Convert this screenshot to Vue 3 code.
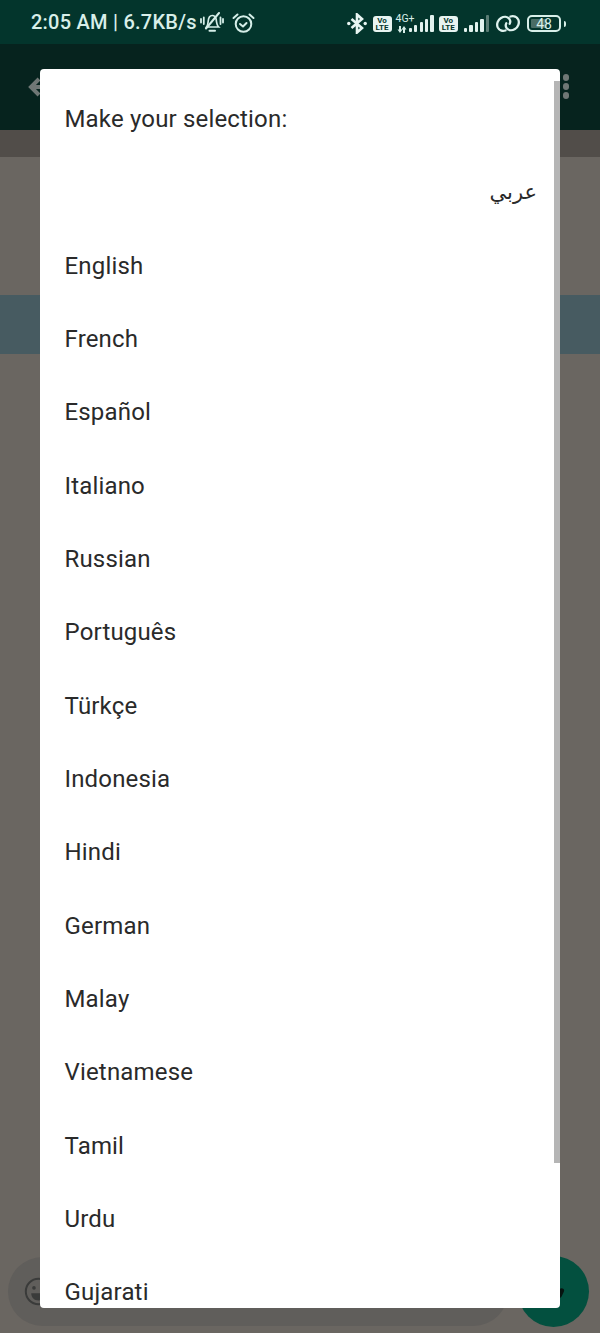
<script setup>
const languages = ['English','French','Español','Italiano','Russian','Português','Türkçe','Indonesia','Hindi','German','Malay','Vietnamese','Tamil','Urdu','Gujarati']
</script>

<template>
  <div class="screen">
    <div class="status">
      <div class="status-left">
        <span class="time">2:05 AM | 6.7KB/s</span>
        <svg class="ic-bell" viewBox="0 0 24 20" fill="none" stroke="#d5eee8" stroke-width="2" stroke-linecap="round">
          <path d="M6.500 15c1.500-2 1.500-4 1.700-6 .3-3 1.800-5.500 4-5.500 2 0 3.600 1.700 4 4 .3 3 .5 5.500 2.500 7.500H6.500z" stroke-width="1.700"/>
          <path d="M9.500 18.800h5.500"/><path d="M6 16.500L19 1"/>
          <path d="M1 7v3.500M3.800 5.500v6.500M20.500 5.500v6.500M23 7v3.500" stroke-width="1.800"/>
        </svg>
        <svg class="ic-alarm" viewBox="0 0 23 20" fill="none" stroke="#d5eee8" stroke-width="2" stroke-linecap="round" stroke-linejoin="round">
          <circle cx="11.500" cy="11" r="7.800"/><path d="M8 11l3 2.500 3.500-3.500"/><path d="M1.500 5l4-3.500M21.500 5l-4-3.500"/>
        </svg>
      </div>
      <div class="status-right">
        <svg class="ic-bt" viewBox="0 0 20 21" fill="none" stroke="#e8f5f2" stroke-width="2.600">
          <path d="M4.500 6l10.500 9-5 4.500V1.500L15 6 4.500 15"/>
          <circle cx="1.800" cy="10.500" r="1.700" fill="#e8f5f2" stroke="none"/><circle cx="18.200" cy="10.500" r="1.700" fill="#e8f5f2" stroke="none"/>
        </svg>
        <span class="volte first">Vo<br>LTE</span>
        <div class="net">
          <span class="net-label">4G+</span>
          <svg class="arrows" viewBox="0 0 10 7" fill="#d8efe9">
            <path d="M2 0h2v3.500h1.500L3 7 .5 3.500H2zM6 7h2V3.500h1.500L7 0 4.500 3.500H6z"/>
          </svg>
        </div>
        <div class="bars">
          <i class="b1"></i><i class="b2"></i><i class="b3"></i><i class="b4"></i><i class="b5"></i>
        </div>
        <span class="volte second">Vo<br>LTE</span>
        <div class="bars dim">
          <i class="b1"></i><i class="b2"></i><i class="b3"></i><i class="b4"></i><i class="b5 off"></i>
        </div>
        <svg class="ic-link" viewBox="0 0 24 17" fill="none" stroke="#dff2ee" stroke-width="2.300" stroke-linecap="round">
          <path d="M9.500 15.500c-3.200.9-6.500-.2-7.800-3.100C.3 9 1.800 5 5 3c3-1.800 6.500-1.500 8.300.8 1.200 1.700 1.200 3.500.4 5"/>
          <path d="M14.500 1.500c3.200-.9 6.500.2 7.800 3.100 1.400 3.400-.1 7.400-3.300 9.400-3 1.800-6.500 1.500-8.300-.8-1.200-1.700-1.200-3.500-.4-5"/>
        </svg>
        <div class="battery">
          <div class="battery-fill"></div>
          <span class="battery-num">48</span>
        </div>
        <span class="battery-tip"></span>
      </div>
    </div>

    <header class="appbar">
      <svg class="ic-back" viewBox="0 0 24 24" fill="none" stroke="#6f7775" stroke-width="4">
        <path d="M22 12H5M13 4l-8 8 8 8"/>
      </svg>
      <div class="dots"><i></i><i></i><i></i></div>
    </header>

    <div class="strip"></div>
    <div class="gap-a"></div>
    <div class="band"></div>
    <div class="main"></div>

    <div class="composer">
      <div class="pill">
        <svg class="ic-emoji" viewBox="0 0 32 32" fill="none" stroke="#3a3b3a" stroke-width="2.200">
          <circle cx="16" cy="16" r="14"/>
          <circle cx="11" cy="12" r="2" fill="#3a3b3a" stroke="none"/><circle cx="21" cy="12" r="2" fill="#3a3b3a" stroke="none"/>
          <path d="M8 18h16c0 5-3.500 8-8 8s-8-3-8-8z" fill="#3a3b3a" stroke="none"/>
        </svg>
      </div>
      <div class="fab">
        <span class="mic"></span>
      </div>
    </div>

    <div class="dialog">
      <div class="scroll">
        <div class="title">Make your selection:</div>
        <div class="row arabic" dir="rtl">عربي</div>
        <div v-for="lang in languages" :key="lang" class="row">{{ lang }}</div>
      </div>
      <div class="scrollbar"></div>
    </div>
  </div>
</template>

<style>
html, body { margin: 0; padding: 0; background: #6a6661; }
</style>

<style scoped>
.screen {
  position: relative;
  width: 600px;
  height: 1333px;
  overflow: hidden;
  display: flex;
  flex-direction: column;
  background: #6a6661;
  font-family: Roboto, "Liberation Sans", sans-serif;
}
.status {
  height: 44px;
  flex: none;
  background: #03352c;
  display: flex;
  align-items: center;
  justify-content: space-between;
  padding: 3px 34px 0 31px;
  box-sizing: border-box;
  color: #d8efe9;
}
.status-left, .status-right { display: flex; align-items: center; }
.time { font-size: 20px; font-weight: 500; white-space: nowrap; letter-spacing: .24px; margin-top: -3px; }
.ic-bell { width: 24px; height: 20px; margin-left: 3px; margin-top: -3px; }
.ic-alarm { width: 23px; height: 20px; margin-left: 8px; margin-top: -2px; }
.ic-bt { width: 20px; height: 21px; margin-top: -1px; }
.volte {
  width: 19px;
  height: 16px;
  border-radius: 3px;
  background: #e8f4f1;
  color: #03352c;
  font-size: 8px;
  line-height: 7.500px;
  font-weight: 700;
  text-align: center;
  padding-top: 1px;
  box-sizing: border-box;
}
.volte.first { margin-left: 6px; }
.volte.second { margin-left: 5px; }
.net { width: 13px; margin-left: 4px; height: 16px; position: relative; }
.net-label { position: absolute; left: 0; top: -3px; font-size: 10.500px; line-height: 12px; color: #d8efe9; white-space: nowrap; }
.arrows { position: absolute; left: 1px; top: 10px; width: 10px; height: 7px; }
.bars { display: flex; align-items: flex-end; gap: 2.200px; height: 17px; }
.bars i { display: block; width: 3.300px; background: #e2f2ee; border-radius: 1px; }
.bars .b1 { height: 4px; }
.bars .b2 { height: 7px; }
.bars .b3 { height: 10px; }
.bars .b4 { height: 13px; }
.bars .b5 { height: 17px; }
.bars .off { background: #5a7c74; }
.bars.dim { margin-left: 6px; }
.ic-link { width: 24px; height: 17px; margin-left: 7px; }
.battery {
  position: relative;
  margin-left: 7px;
  width: 34px;
  height: 17px;
  box-sizing: border-box;
  border: 2px solid #d8efe9;
  border-radius: 5px;
  overflow: hidden;
  display: flex;
  align-items: center;
  justify-content: center;
}
.battery-fill { position: absolute; left: 2px; top: 2px; bottom: 2px; width: 16px; background: #4a6d65; border-radius: 1px; }
.battery-num { position: relative; font-size: 14px; line-height: 1; color: #d8efe9; }
.battery-tip { width: 2px; height: 6px; margin-left: 3px; background: #d8efe9; border-radius: 0 2px 2px 0; }

.appbar {
  height: 86px;
  flex: none;
  position: relative;
  background: #06231e;
  display: flex;
  align-items: center;
  justify-content: space-between;
  padding: 0 31px 0 30px;
  box-sizing: border-box;
}
.ic-back { width: 24px; height: 24px; margin-left: -4px; margin-top: -1px; }
.dots { display: flex; flex-direction: column; gap: 2.500px; margin-top: -1px; }
.dots i { display: block; width: 6.500px; height: 6.500px; border-radius: 50%; background: #6f7775; }
.strip { height: 27px; flex: none; background: #514d49; }
.gap-a { height: 138px; flex: none; background: #6a6661; }
.band { height: 59px; flex: none; background: #475b61; }
.main { flex: 1; background: #6a6661; }

.composer {
  position: absolute;
  left: 8px;
  right: 11px;
  top: 1256px;
  height: 71px;
  display: flex;
  align-items: center;
  justify-content: space-between;
}
.pill {
  width: 500px;
  height: 69px;
  border-radius: 35px;
  background: #605e5b;
  display: flex;
  align-items: center;
  padding-left: 16px;
  box-sizing: border-box;
}
.ic-emoji { width: 29px; height: 29px; }
.fab {
  position: relative;
  width: 71px;
  height: 71px;
  border-radius: 50%;
  background: #03503f;
}
.mic { position: absolute; left: 40px; top: 32px; width: 5px; height: 10px; background: #06130f; border-radius: 3px; transform: rotate(25deg); }

.dialog {
  position: absolute;
  left: 40px;
  top: 69px;
  width: 520px;
  height: 1239px;
  background: #fff;
  border-radius: 4px;
  overflow: hidden;
}
.scroll { padding: 14px 24px 0 25px; }
.title, .row {
  height: 73.330px;
  line-height: 73.330px;
  font-size: 24px;
  letter-spacing: .17px;
  margin-left: -.5px;
  color: #2a2a2a;
  white-space: nowrap;
}
.arabic {
  font-family: "DejaVu Sans", sans-serif;
  text-align: right;
  font-size: 21px;
  margin-right: -1px;
}
.scrollbar {
  position: absolute;
  right: 0;
  top: 12px;
  width: 6px;
  height: 1082px;
  background: #b5b5b5;
}
</style>
